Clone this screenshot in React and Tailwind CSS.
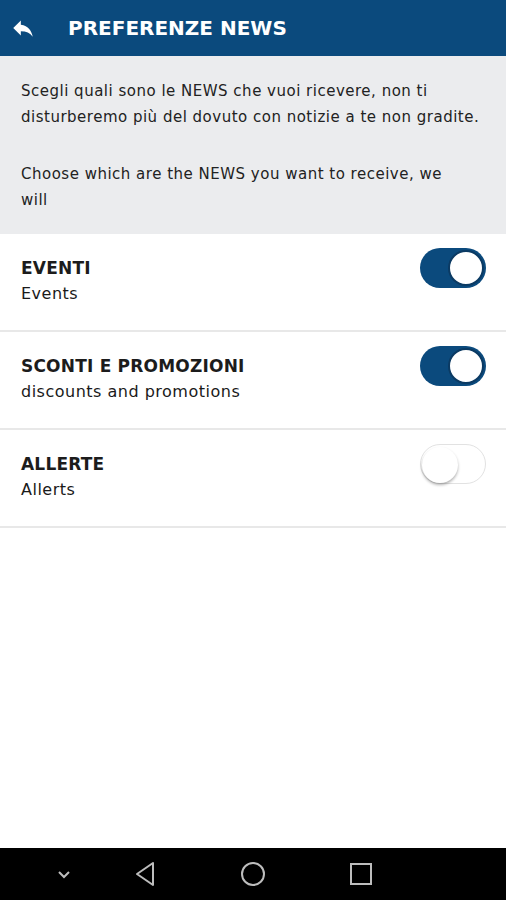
import { useState } from 'react';

const items = [
  { id: 'eventi', title: 'EVENTI', subtitle: 'Events', on: true },
  { id: 'sconti', title: 'SCONTI E PROMOZIONI', subtitle: 'discounts and promotions', on: true },
  { id: 'allerte', title: 'ALLERTE', subtitle: 'Allerts', on: false },
];

const Toggle = ({ on, onClick }) => (
  <button
    onClick={onClick}
    className={`relative w-[66px] h-[40px] rounded-full shrink-0 ${
      on ? 'bg-[#0b4a7d]' : 'bg-white border border-[#e2e2e2]'
    }`}
  >
    <span
      className={`absolute top-[2px] w-[36px] h-[36px] rounded-full bg-white ${
        on ? 'right-[2px] border-2 border-[#0b3a63]' : 'left-[1px] top-[1px] shadow-[0_2px_3px_rgba(0,0,0,0.3)]'
      }`}
    />
  </button>
);

const App = () => {
  const [prefs, setPrefs] = useState(items);

  const toggle = id => {
    setPrefs(prefs.map(p => (p.id === id ? { ...p, on: !p.on } : p)));
  };

  return (
    <div className="w-[506px] h-[900px] flex flex-col bg-white font-['DejaVu_Sans',sans-serif] text-[#1a1a1a]">
      {/* Header */}
      <header className="h-[56px] bg-[#0b4a7d] flex items-center shrink-0">
        <div className="w-[68px] flex justify-center pr-[22px]">
          <svg width="26" height="26" viewBox="0 0 24 24" fill="white">
            <path d="M10 9V5l-7 7 7 7v-4.1c5 0 8.5 1.6 11 5.1-1-5-4-10-11-11z" />
          </svg>
        </div>
        <h1 className="text-white text-[20px] font-bold">PREFERENZE NEWS</h1>
      </header>

      {/* Intro */}
      <div className="bg-[#ebecee] px-[21px] pt-[22px] pb-[21px] text-[15px] leading-[26px] tracking-[0.5px] text-[#222]">
        <p>
          Scegli quali sono le NEWS che vuoi ricevere, non ti
          <br />
          disturberemo più del dovuto con notizie a te non gradite.
        </p>
        <p className="mt-[31px]">
          Choose which are the NEWS you want to receive, we
          <br />
          will
        </p>
      </div>

      {/* List */}
      <div className="flex-1">
        {prefs.map(p => (
          <div key={p.id} className="h-[98px] border-b-2 border-[#e8e8e8] flex justify-between pl-[21px] pr-[20px] pt-[14px]">
            <div className="pt-[8px]">
              <div className="text-[17px] font-bold leading-[24px] tracking-[0.2px] text-[#1c1c1c]">{p.title}</div>
              <div className="text-[16px] leading-[22px] mt-[3px] tracking-[0.5px]">{p.subtitle}</div>
            </div>
            <Toggle on={p.on} onClick={() => toggle(p.id)} />
          </div>
        ))}
      </div>

      {/* Nav bar */}
      <nav className="h-[52px] bg-black flex items-center shrink-0">
        <div className="w-[128px] flex justify-center">
          <svg width="20" height="20" viewBox="0 0 20 20" fill="none" stroke="#bdbdbd" strokeWidth="2">
            <path d="M5 8l5 5 5-5" />
          </svg>
        </div>
        <div className="w-[34px] flex justify-center">
          <svg width="22" height="26" viewBox="0 0 22 26" fill="none" stroke="#bdbdbd" strokeWidth="2" strokeLinejoin="round">
            <path d="M19 2L3 13l16 11z" />
          </svg>
        </div>
        <div className="w-[182px] flex justify-center">
          <svg width="26" height="26" viewBox="0 0 26 26" fill="none" stroke="#bdbdbd" strokeWidth="2">
            <circle cx="13" cy="13" r="11" />
          </svg>
        </div>
        <div className="w-[34px] flex justify-center">
          <svg width="22" height="22" viewBox="0 0 22 22" fill="none" stroke="#bdbdbd" strokeWidth="2">
            <rect x="1" y="1" width="20" height="20" />
          </svg>
        </div>
      </nav>
    </div>
  );
};

export default App;
